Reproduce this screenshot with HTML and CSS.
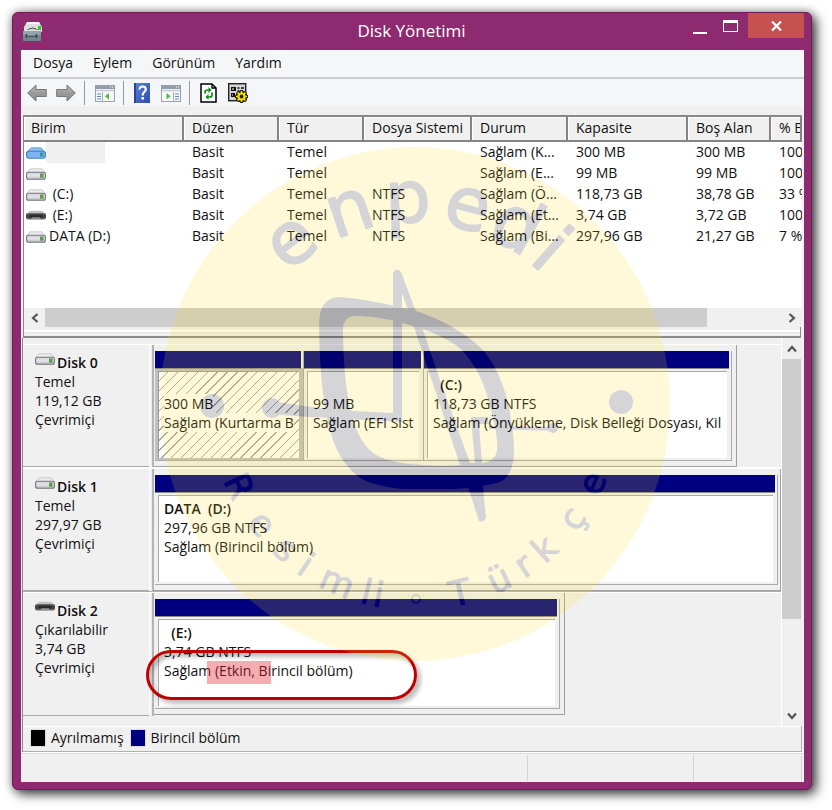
FILE: index.html
```html
<!DOCTYPE html>
<html lang="tr">
<head>
<meta charset="utf-8">
<meta name="viewport" content="width=device-width, initial-scale=1">
<title>Disk Yönetimi</title>
<link rel="stylesheet" href="styles.css">
</head>
<body>
<svg class="defs" aria-hidden="true">
  <defs>
    <linearGradient id="metal" x1="0" y1="0" x2="0" y2="1"><stop offset="0" stop-color="#d2d2d6"/><stop offset=".5" stop-color="#e4e4ea"/><stop offset="1" stop-color="#b4b4bc"/></linearGradient>
    <linearGradient id="dark" x1="0" y1="0" x2="0" y2="1"><stop offset="0" stop-color="#77777a"/><stop offset=".4" stop-color="#3d3d3f"/><stop offset="1" stop-color="#6a6a6d"/></linearGradient>
    <linearGradient id="arrow" x1="0" y1="0" x2="0" y2="1"><stop offset="0" stop-color="#bdbdbd"/><stop offset=".5" stop-color="#9a9a9a"/><stop offset="1" stop-color="#8a8a8a"/></linearGradient>
    <linearGradient id="help" x1="0" y1="0" x2="1" y2="1"><stop offset="0" stop-color="#5b84dc"/><stop offset="1" stop-color="#2a4cae"/></linearGradient>
    <symbol id="drive" viewBox="0 0 20 12">
      <path d="M4 .8h12L19.500 5H.5z" fill="#ececed" stroke="#bdbdbd" stroke-width=".7"/>
      <rect x=".6" y="4.300" width="18.800" height="7" rx="2" fill="url(#metal)" stroke="#77777c" stroke-width="1.100"/>
      <rect x="14" y="5.500" width="3.600" height="4.200" fill="#6c8f62"/><rect x="15" y="6" width="1.600" height="3.200" fill="#3fb529"/>
    </symbol>
    <symbol id="drive-selected" viewBox="0 0 20 12">
      <path d="M5 .8h10l4.500 4.700H.5z" fill="#8bbdf0" stroke="#5b9bd8" stroke-width=".8"/>
      <rect x=".6" y="4.300" width="18.800" height="7" rx="2.500" fill="#7db4ee" stroke="#3d7fc4" stroke-width="1.100"/>
      <rect x="14" y="5.500" width="3.400" height="4" fill="#3f8fb0"/><rect x="15" y="6" width="1.400" height="3" fill="#2fa08c"/>
    </symbol>
    <symbol id="removable" viewBox="0 0 20 12">
      <path d="M4 .8h12L19.500 4H.5z" fill="#c2c2c4"/>
      <rect y="3" width="20" height="6.500" rx="2" fill="url(#dark)"/>
      <path d="M4 4.500h12l1.500 3h-15z" fill="#2b2b2d"/>
      <path d="M5 9l1.500-1.800h7L15 9z" fill="#8f8f92"/>
    </symbol>
  </defs>
</svg>

<div class="window">
  <header class="titlebar">
    <svg class="app-icon" viewBox="0 0 20 20" aria-hidden="true">
      <path d="M4 1h12l3 5v5H1V6z" fill="#dcdede"/><path d="M4 1h12l1 2H3z" fill="#f4f4f4"/>
      <path d="M4 9q5.500-5 11 0z" fill="#3c4347"/><path d="M5 9q4.500-3 9 0z" fill="#cfd4d6"/><rect x="15" y="5" width="3" height="4" fill="#35c922"/>
      <rect y="10" width="18" height="10" rx="1" fill="#75858e"/><rect y="10" width="18" height="4" fill="#94a3aa"/>
      <path d="M5 15.500h8" fill="none" stroke="#46545d"/><path d="M3.500 13v4M13.500 13v4" stroke="#3a4850" stroke-width="1.500"/>
    </svg>
    <h1 class="title">Disk Yönetimi</h1>
    <div class="window-buttons">
      <button class="win-btn" type="button" aria-label="Simge durumuna küçült"><svg width="14" height="18" viewBox="0 0 14 18"><rect y="15" width="14" height="2" fill="#fff"/></svg></button>
      <button class="win-btn" type="button" aria-label="Ekranı kapla"><svg width="15" height="12" viewBox="0 0 15 12"><path d="M0 0h15v12H0zM1 3v8h13V3z" fill="#fff" fill-rule="evenodd"/></svg></button>
      <button class="win-btn close" type="button" aria-label="Kapat"><svg width="11" height="10" viewBox="0 0 11 10"><path d="M1 .5l9 9M10 .5l-9 9" stroke="#fff" stroke-width="2.200"/></svg></button>
    </div>
  </header>

  <main class="client">
    <nav class="menubar" aria-label="Menü">
      <button type="button">Dosya</button><button type="button">Eylem</button><button type="button">Görünüm</button><button type="button">Yardım</button>
    </nav>
    <div class="toolbar">
      <div class="tools tight">
        <button type="button" aria-label="Geri"><svg width="20" height="18" viewBox="0 0 20 18"><path d="M.7 9L9 1v4.500h10.300v7H9V17z" fill="url(#arrow)" stroke="#777"/></svg></button>
        <button type="button" aria-label="İleri"><svg width="20" height="18" viewBox="0 0 20 18"><path d="M19.300 9L11 1v4.500H.7v7H11V17z" fill="url(#arrow)" stroke="#777"/></svg></button>
      </div>
      <div class="tools">
        <button type="button" aria-label="Konsol ağacını göster"><svg width="20" height="17" viewBox="0 0 20 17"><rect x=".5" y=".5" width="19" height="16" fill="#f7f8f9" stroke="#9aa0a8"/><path d="M1 1h18v3H1z" fill="#8f9dac"/><path d="M1 5.500h18" stroke="#c3c9cf" stroke-width="1.500"/><path d="M7.500 7v9.500" stroke="#a8afb6"/><path d="M2 9h4M2 11.500h4M2 14h4" stroke="#5d8cc4"/><path d="M14 8v6.500L9.800 11.200z" fill="#57b947"/><path d="M15 2h1M17 2h1" stroke="#fff"/></svg></button>
      </div>
      <div class="tools">
        <button type="button" aria-label="Yardım"><svg width="16" height="20" viewBox="0 0 16 20"><rect width="16" height="20" fill="url(#help)"/><path d="M0 0h2v20H0z" fill="#2b4590"/><path d="M5.500 6.500q0-3 3.300-3 3 0 3 2.800 0 1.700-1.700 2.900-1.400 1-1.400 3.300" fill="none" stroke="#fff" stroke-width="2.200"/><rect x="7.500" y="14" width="2.400" height="2.600" fill="#fff"/></svg></button>
        <button type="button" aria-label="Eylem bölmesini göster"><svg width="20" height="17" viewBox="0 0 20 17"><rect x=".5" y=".5" width="19" height="16" fill="#f7f8f9" stroke="#9aa0a8"/><path d="M1 1h18v3H1z" fill="#8f9dac"/><path d="M1 5.500h18" stroke="#c3c9cf" stroke-width="1.500"/><path d="M12.500 7v9.500" stroke="#a8afb6"/><path d="M14 9h4M14 11.500h4M14 14h4" stroke="#5d8cc4"/><path d="M5.500 8v6.500l4.200-3.300z" fill="#57b947"/><path d="M15 2h1M17 2h1" stroke="#fff"/></svg></button>
      </div>
      <div class="tools">
        <button type="button" aria-label="Yenile"><svg width="17" height="20" viewBox="0 0 17 20"><path d="M1 1h11l4 4v14H1z" fill="#fff" stroke="#000" stroke-width="1.500"/><path d="M12 1v4h4" fill="none" stroke="#000" stroke-width="1.300"/><path d="M5 10.500V9q0-2 2.500-2H9M12 9.500V12q0 2-2 2H8" fill="none" stroke="#0a8c14" stroke-width="1.700"/><path d="M8.500 4v6l3-3zM8.500 11v6l-3-3z" fill="#0a8c14"/></svg></button>
        <button type="button" aria-label="Ayarlar"><svg width="20" height="20" viewBox="0 0 20 20"><rect x=".7" y=".7" width="17" height="17" fill="#d4d4d4" stroke="#222" stroke-width="1.400"/><path d="M3 4h5v4H3zM3 10h4v4H3z" fill="#111"/><path d="M9.500 5h2M13 5h3M9.500 8h2M13 8h2" stroke="#111" stroke-width="1.600"/><path d="M4 6h2M4 12h1" stroke="#fff"/><g fill="none" stroke="#222"><circle cx="13.500" cy="13.500" r="4" stroke-width="4"/><path d="M13.500 7v13M7 13.500h13M9 9l9 9M18 9l-9 9" stroke-width="3"/></g><g fill="none" stroke="#f2dc00"><circle cx="13.500" cy="13.500" r="3" stroke-width="2.200"/><path d="M13.500 8v2M13.500 17v2M8 13.500h2M17 13.500h2M9.600 9.600l1.400 1.400M16 16l1.400 1.400M17.400 9.600L16 11M11 16l-1.400 1.400" stroke-width="1.500"/></g></svg></button>
      </div>
    </div>

    <section class="volumes" aria-label="Birimler">
      <div class="volume-list">
        <table>
          <colgroup><col class="c-volume"><col class="c-layout"><col class="c-type"><col class="c-fs"><col class="c-status"><col class="c-size"><col class="c-free"><col class="c-pct"></colgroup>
          <thead><tr><th>Birim</th><th>Düzen</th><th>Tür</th><th>Dosya Sistemi</th><th>Durum</th><th>Kapasite</th><th>Boş Alan</th><th>% Boş</th></tr></thead>
          <tbody>
            <tr><td><span class="volume selected"><svg class="drive"><use href="#drive-selected"/></svg><span class="name"></span></span></td><td>Basit</td><td>Temel</td><td></td><td>Sağlam (K...</td><td>300 MB</td><td>300 MB</td><td>100 %</td></tr>
            <tr><td><span class="volume"><svg class="drive"><use href="#drive"/></svg></span></td><td>Basit</td><td>Temel</td><td></td><td>Sağlam (E...</td><td>99 MB</td><td>99 MB</td><td>100 %</td></tr>
            <tr><td><span class="volume"><svg class="drive"><use href="#drive"/></svg><span class="name">&nbsp;(C:)</span></span></td><td>Basit</td><td>Temel</td><td>NTFS</td><td>Sağlam (Ö...</td><td>118,73 GB</td><td>38,78 GB</td><td>33 %</td></tr>
            <tr><td><span class="volume"><svg class="drive"><use href="#removable"/></svg><span class="name">&nbsp;(E:)</span></span></td><td>Basit</td><td>Temel</td><td>NTFS</td><td>Sağlam (Et...</td><td>3,74 GB</td><td>3,72 GB</td><td>100 %</td></tr>
            <tr><td><span class="volume"><svg class="drive"><use href="#drive"/></svg><span class="name">DATA (D:)</span></span></td><td>Basit</td><td>Temel</td><td>NTFS</td><td>Sağlam (Bi...</td><td>297,96 GB</td><td>21,27 GB</td><td>7 %</td></tr>
          </tbody>
        </table>
      </div>
      <div class="hscroll">
        <button type="button" aria-label="Sola kaydır"><svg width="8" height="10" viewBox="0 0 8 10"><path d="M6.500 1L2 5l4.500 4" fill="none" stroke="#555" stroke-width="2.200"/></svg></button>
        <div class="track"><div class="thumb"></div></div>
        <button type="button" aria-label="Sağa kaydır"><svg width="8" height="10" viewBox="0 0 8 10"><path d="M1.500 1L6 5 1.500 9" fill="none" stroke="#555" stroke-width="2.200"/></svg></button>
      </div>
    </section>
    <div class="splitter"></div>

    <section class="graphical" aria-label="Diskler">
      <div class="disk-view">
        <div class="disks">
          <article class="disk">
            <div class="disk-head">
              <h2><svg class="drive"><use href="#drive"/></svg>Disk 0</h2>
              <p>Temel</p><p>119,12 GB</p><p>Çevrimiçi</p>
            </div>
            <div class="strip-area">
              <div class="strip strip-0">
                <div class="part hatched"><div class="bar"></div><div class="part-body"><p class="label"></p><p><span>300 MB</span></p><p><span>Sağlam (Kurtarma Bölümü)</span></p></div></div>
                <div class="part"><div class="bar"></div><div class="part-body"><p class="label"></p><p>99 MB</p><p>Sağlam (EFI Sistem Bölümü)</p></div></div>
                <div class="part"><div class="bar"></div><div class="part-body"><p class="label">&nbsp;&nbsp;(C:)</p><p>118,73 GB NTFS</p><p>Sağlam (Önyükleme, Disk Belleği Dosyası, Kilitlenme Bilgi Dökümü)</p></div></div>
              </div>
            </div>
          </article>
          <article class="disk">
            <div class="disk-head">
              <h2><svg class="drive"><use href="#drive"/></svg>Disk 1</h2>
              <p>Temel</p><p>297,97 GB</p><p>Çevrimiçi</p>
            </div>
            <div class="strip-area">
              <div class="strip">
                <div class="part"><div class="bar"></div><div class="part-body"><p class="label">DATA&nbsp; (D:)</p><p>297,96 GB NTFS</p><p>Sağlam (Birincil bölüm)</p></div></div>
              </div>
            </div>
          </article>
          <article class="disk">
            <div class="disk-head">
              <h2><svg class="drive"><use href="#removable"/></svg>Disk 2</h2>
              <p>Çıkarılabilir</p><p>3,74 GB</p><p>Çevrimiçi</p>
            </div>
            <div class="strip-area">
              <div class="strip strip-2">
                <div class="part"><div class="bar"></div><div class="part-body"><p class="label">&nbsp;&nbsp;(E:)</p><p>3,74 GB NTFS</p><p>Sağlam (Etkin, Birincil bölüm)</p></div></div>
              </div>
              <span class="marker"></span>
              <span class="callout"></span>
            </div>
          </article>
        </div>
        <div class="vscroll">
          <button type="button" aria-label="Yukarı kaydır"><svg width="10" height="8" viewBox="0 0 10 8"><path d="M1 6.500L5 2l4 4.500" fill="none" stroke="#555" stroke-width="2.200"/></svg></button>
          <div class="track"><div class="thumb"></div></div>
          <button type="button" aria-label="Aşağı kaydır"><svg width="10" height="8" viewBox="0 0 10 8"><path d="M1 1.500L5 6l4-4.500" fill="none" stroke="#555" stroke-width="2.200"/></svg></button>
        </div>
      </div>
      <div class="legend">
        <span class="key unallocated">Ayrılmamış</span>
        <span class="key primary">Birincil bölüm</span>
      </div>
    </section>
    <footer class="statusbar"><span></span><span></span><span></span></footer>
  </main>

  <svg class="watermark" viewBox="159 147 512 514" aria-hidden="true">
    <defs>
      <path id="arc-top" d="M257.400 313A182 182 0 0 1 572.600 313"/>
      <path id="arc-bottom" d="M212.100 439.800A206 206 0 0 0 617.900 439.800"/>
    </defs>
    <g opacity=".16">
      <ellipse cx="415" cy="404" rx="255" ry="257" fill="#ffde1e"/>
      <g fill="#000014">
        <path fill-rule="evenodd" d="M319 325Q319 297 340 297Q366 299 413 310Q455 323 483 350Q503 374 510 413Q516 447 513 462Q510 479 497 483Q475 488 453 489L403 489Q375 486 362 479Q342 466 333 440Q320 405 319 325ZM343 330Q343 316 356 316Q380 316 417 327Q447 337 462 350Q478 367 486 392Q499 435 497 451Q495 461 483 463Q450 467 423 465Q385 463 372 452Q357 440 350 408Q343 375 343 330Z"/>
        <path d="M393 274Q394 269 399 270Q402 272 404 280L423 330L440 380L470 463L475 463L471 417L488 417L489 426L552 427V431L489 429V424L479 424L482 463L483 487L486 517Q484 523 479 521L469 490L460 465L415 330L402 293V422L345 419L278 415V402Q320 409 352 411L393 413Z"/>
        <circle cx="212" cy="406" r="12"/><circle cx="272" cy="408" r="10"/><circle cx="553" cy="428" r="5"/><circle cx="621" cy="402" r="12"/>
        <text class="mark-large" x="72 131 184 238 285 322"><textPath href="#arc-top">enpedi</textPath></text>
        <text class="mark-small" x="54 101 138 165 203 236 249"><textPath href="#arc-bottom">Resimli</textPath></text>
        <text class="mark-small" x="336 380 410 438 482 525"><textPath href="#arc-bottom">Türkçe</textPath></text>
        <circle cx="416" cy="599" r="4" fill="none" stroke="#000014" stroke-width="1.500"/>
      </g>
    </g>
  </svg>
</div>
</body>
</html>
```
FILE: styles.css
```css
* { box-sizing: border-box; }

body {
  margin: 0;
  padding: 12px 20px 20px 12px;
  background: #fff;
  color: #111;
  font: 14px/19px "Open Sans", "Noto Sans", sans-serif;
}

h1, h2, p { margin: 0; font-size: inherit; font-weight: inherit; }
button { margin: 0; padding: 0; border: 0; background: none; color: inherit; font: inherit; }
svg { display: block; }
.defs { position: absolute; width: 0; height: 0; }

.window {
  position: relative;
  display: flex;
  flex-direction: column;
  min-height: calc(100vh - 32px);
  padding: 0 7px 7px 8px;
  border: 1px solid #6d1c57;
  border-radius: 6px;
  background: #8d2a70;
  box-shadow: 4px 4px 12px rgba(0, 0, 0, .75), 0 0 10px rgba(0, 0, 0, .3);
}

/* Title bar */
.titlebar { display: flex; align-items: flex-start; height: 37px; color: #fff; }
.app-icon { width: 20px; height: 20px; margin: 8px 0 0 2px; }
.title { flex: 1; padding: 5px 0 0 96px; text-align: center; font-size: 17px; line-height: 26px; }
.window-buttons { display: flex; }
.win-btn { display: flex; align-items: center; justify-content: center; width: 31px; height: 25px; }
.win-btn.close { width: 56px; margin-left: 2px; background: #c75050; }

/* Client area */
.client { display: flex; flex: 1; flex-direction: column; min-width: 0; background: #f0f0f0; }
.menubar { display: flex; gap: 20px; height: 29px; padding: 0 12px 2px; border-bottom: 2px solid #ccc; background: #f5f6f8; }
.toolbar { display: flex; height: 27px; margin-bottom: 9px; padding: 2px 6px 0; background: #f5f6f8; }
.tools { display: flex; align-items: center; gap: 11px; height: 24px; padding-right: 8px; }
.tools + .tools { padding-left: 10px; border-left: 1px solid #999; }
.tools.tight { gap: 9px; }

/* Volume list */
.volumes { margin: 0 2px; border-top: 2px solid #898989; border-left: 1px solid #898989; background: #fff; }
.volume-list { height: 191px; overflow: hidden; }
table { width: 100%; min-width: 777px; border-collapse: separate; border-spacing: 0; table-layout: fixed; }
.c-volume { width: 160px; }
.c-layout { width: 95px; }
.c-type { width: 85px; }
.c-fs { width: 108px; }
.c-status { width: 96px; }
.c-size { width: 120px; }
.c-free { width: 83px; }
th, td { overflow: hidden; padding: 0 0 0 8px; text-align: left; white-space: nowrap; font-weight: 400; }
th { height: 25px; padding-bottom: 2px; border: solid #848484; border-width: 0 2px 2px 0; background: #f0f0f0; box-shadow: inset 1px 1px #fff; }
th:first-child { padding-left: 7px; }
td { height: 21px; padding-bottom: 2px; }
td:first-child { padding: 0 0 0 2px; }
.volume { display: flex; align-items: center; height: 21px; }
.volume .name { height: 21px; padding-left: 3px; }
.volume.selected .name { width: 59px; background: #f0f0f0; }
.drive { flex: none; width: 20px; height: 12px; }

/* Scroll bars */
.hscroll { display: flex; height: 19px; background: #f0f0f0; }
.hscroll button { display: flex; align-items: center; justify-content: center; width: 21px; }
.hscroll .track { flex: 1; }
.hscroll .thumb { width: 90%; height: 100%; background: #cdcdcd; }
.vscroll { display: flex; flex-direction: column; width: 19px; margin-right: 3px; }
.vscroll button { display: flex; align-items: center; justify-content: center; height: 21px; }
.vscroll .track { flex: 1; }
.vscroll .thumb { height: 75%; background: #cdcdcd; }

.splitter { height: 11px; margin: 0 3px 0 2px; border: solid #8a8a8a; border-width: 0 1px 2px; background: linear-gradient(#f0f0f0 3px, #fff 3px 5px, #e4e4e4 5px 6px, #f0f0f0 6px); }

/* Graphical view */
.graphical { display: flex; flex: 1; flex-direction: column; margin-left: 1px; border-left: 1px solid #8a8a8a; }
.disk-view { display: flex; flex: 1; }
.disks { flex: 1; min-width: 0; padding-top: 6px; border-right: 1px solid #fff; }
.disk { display: flex; height: 124px; border-top: 1px solid #fff; border-bottom: 1px solid #b0b0b0; }
.disk:first-child { border-bottom-color: #fff; }
.disk:last-child { border-bottom: 0; }
.disk-head { width: 131px; padding: 8px 0 0 12px; border-right: 2px solid #b4b4b4; box-shadow: inset -2px 0 #f0f0f0, inset -3px 0 #fff, inset 0 -1px #a9a9a9; }
.disk h2 { display: flex; gap: 2px; font-weight: 600; }
.strip-area { position: relative; flex: 1; min-width: 0; }
.strip { display: grid; grid-template-columns: 1fr; height: 122px; padding: 6px 2px 5px 1px; border-right: 1px solid #a0a0a0; border-bottom: 1px solid #a0a0a0; }
.strip-0 { grid-template-columns: 149fr 120fr 308fr; width: 93%; padding-right: 4px; }
.strip-2 { width: 65.5%; padding-right: 4px; }
.part { display: flex; flex-direction: column; min-width: 0; border-right: 1px solid #a9a9a9; border-bottom: 1px solid #a9a9a9; }
.bar { flex: none; height: 18px; margin-right: 2px; border-bottom: 1px solid #888; background: #000080; }
.part-body { flex: 1; margin: 2px 4px 2px 3px; padding: 3px 5px 0; border: solid #a9a9a9; border-width: 1px 0 0 1px; background: #fff; white-space: nowrap; }
.part-body p { overflow: hidden; height: 19px; }
.part-body .label { font-weight: 600; }
.hatched { background: #c0c0c0; }
.hatched .bar { margin-right: 0; border-right: 2px solid #f0f0f0; }
.hatched .part-body { border-color: #999; background: repeating-linear-gradient(135deg, #fff 0 6px, #a5a5a5 6px 7px); }
.hatched span { background: #fff; }

/* Annotation over the active partition */
.marker { position: absolute; top: 68px; left: 53px; width: 64px; height: 23px; background: rgba(230, 40, 50, .38); }
.callout { position: absolute; top: 57px; left: -8px; width: 271px; height: 50px; border: 3px solid #c00000; border-radius: 25px; box-shadow: 4px 4px 4px rgba(0, 0, 0, .25), inset 3px 4px 4px rgba(0, 0, 0, .25); }

.legend { display: flex; align-items: center; gap: 6px; height: 26px; margin-right: 2px; padding: 0 7px 2px; border: solid #b0b0b0; border-width: 0 1px 1px 0; box-shadow: inset 0 1px #fff; }
.key { display: flex; align-items: center; gap: 5px; }
.key::before { width: 14px; height: 16px; border: 1px solid #ddd; content: ""; }
.unallocated::before { background: #000; }
.primary::before { background: #000080; }

.statusbar { display: grid; grid-template-columns: 508fr 166fr 108fr; height: 30px; padding: 2px 2px 1px 0; border-top: 1px solid #fff; box-shadow: inset 0 1px #dcdcdc; }
.statusbar span { border-right: 1px solid #d4d4d4; }

/* Logo laid over the window */
.watermark { position: absolute; top: 134px; left: 146px; width: 512px; height: 514px; pointer-events: none; }
.mark-large, .mark-small { font-family: "DejaVu Sans", sans-serif; text-anchor: middle; stroke: #000014; stroke-linejoin: round; }
.mark-large { font-size: 72px; stroke-width: 2px; }
.mark-small { font-size: 35px; stroke-width: 1px; }
```
